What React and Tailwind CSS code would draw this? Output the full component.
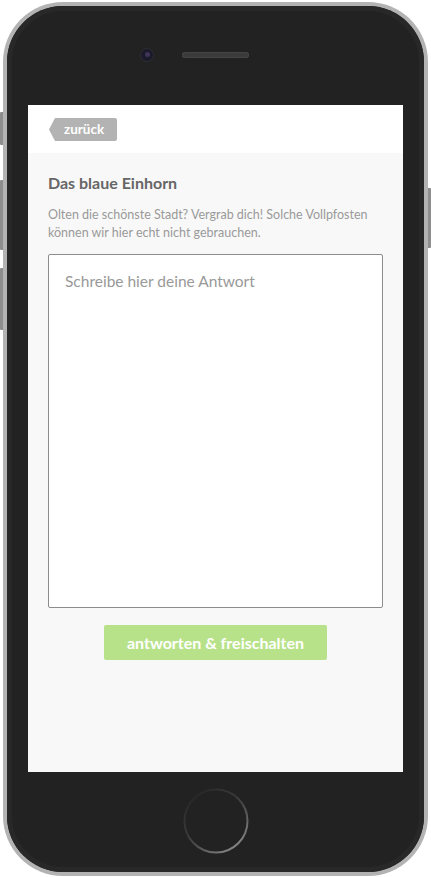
import React from 'react';

function HomeButton() {
  return (
    <svg width="66" height="66" viewBox="0 0 66 66">
      <defs>
        <linearGradient id="hb" x1="0.15" y1="0.05" x2="0.85" y2="0.95">
          <stop offset="0" stopColor="#666" stopOpacity="0.05" />
          <stop offset="0.4" stopColor="#555" stopOpacity="0.45" />
          <stop offset="1" stopColor="#8d8d8d" />
        </linearGradient>
      </defs>
      <circle cx="33" cy="33" r="31.5" fill="none" stroke="url(#hb)" strokeWidth="2" />
    </svg>
  );
}

export default function App() {
  return (
    <div className="w-[431px] h-[877px] bg-white font-['Lato','Liberation_Sans',sans-serif] relative">
      {/* hardware buttons */}
      <div className="absolute left-0 top-[112px] w-[4px] h-[33px] bg-[#8e8e8e] rounded-l-[1px]" />
      <div className="absolute left-0 top-[180px] w-[4px] h-[70px] bg-[#8e8e8e] rounded-l-[1px]" />
      <div className="absolute left-0 top-[268px] w-[4px] h-[62px] bg-[#8e8e8e] rounded-l-[1px]" />
      <div className="absolute right-0 top-[188px] w-[4px] h-[60px] bg-[#8e8e8e] rounded-r-[1px]" />

      <div className="absolute left-[3px] top-[2px] w-[425px] h-[874px] rounded-[60px] bg-[#b3b3b3] p-[4px]">
        <div className="w-full h-full rounded-[56px] bg-[#222] shadow-[inset_0_0_0_5px_#282828] flex flex-col items-center">
          {/* top bezel */}
          <div className="h-[99px] w-full flex items-center justify-center pb-[2px]">
            <div className="relative w-[67px] h-[6px] rounded-full bg-[#3b3b3b] shadow-[inset_0_0_0_1px_#444]">
              <div className="absolute left-[-41px] top-[-3px] w-[12px] h-[12px] rounded-full bg-[#1a1a2a] shadow-[0_0_0_1px_#2c2c33] flex items-center justify-center">
                <div className="w-[5px] h-[5px] rounded-full bg-[#3e3558]" />
              </div>
            </div>
          </div>

          {/* screen */}
          <div className="w-[375px] h-[667px] bg-[#f8f8f8] flex flex-col">
            <div className="h-[48px] bg-white flex items-center pl-[21px] pt-[1px]">
              <div className="h-[23px] w-[68px] bg-[#b3b3b3] rounded-r-[2px] [clip-path:polygon(6px_0,100%_0,100%_100%,6px_100%,0_50%)] flex items-center pl-[15px] text-white font-bold text-[13.5px] leading-none">
                zurück
              </div>
            </div>
            <div className="px-5 pt-[20px] flex flex-col">
              <h2 className="text-[16px] leading-[20px] font-bold text-[#666]">Das blaue Einhorn</h2>
              <p className="mt-[13px] text-[12.5px] leading-[18px] text-[#9a9a9a]">
                Olten die schönste Stadt? Vergrab dich! Solche Vollpfosten können wir hier echt nicht gebrauchen.
              </p>
              <textarea
                className="mt-[12px] h-[354px] w-full bg-white border border-[#8c8c8c] rounded-[2px] px-4 pt-[16px] text-[15.5px] leading-[20px] text-[#555] placeholder:text-[#999] resize-none outline-none"
                placeholder="Schreibe hier deine Antwort"
              />
              <button className="mt-[17px] mx-auto w-[223px] h-[35px] rounded-[2px] bg-[#b8e28a] text-white font-bold text-[16px]">
                antworten &amp; freischalten
              </button>
            </div>
          </div>

          {/* bottom bezel */}
          <div className="flex-1 w-full flex items-center justify-center pb-[2px]">
            <HomeButton />
          </div>
        </div>
      </div>
    </div>
  );
}
